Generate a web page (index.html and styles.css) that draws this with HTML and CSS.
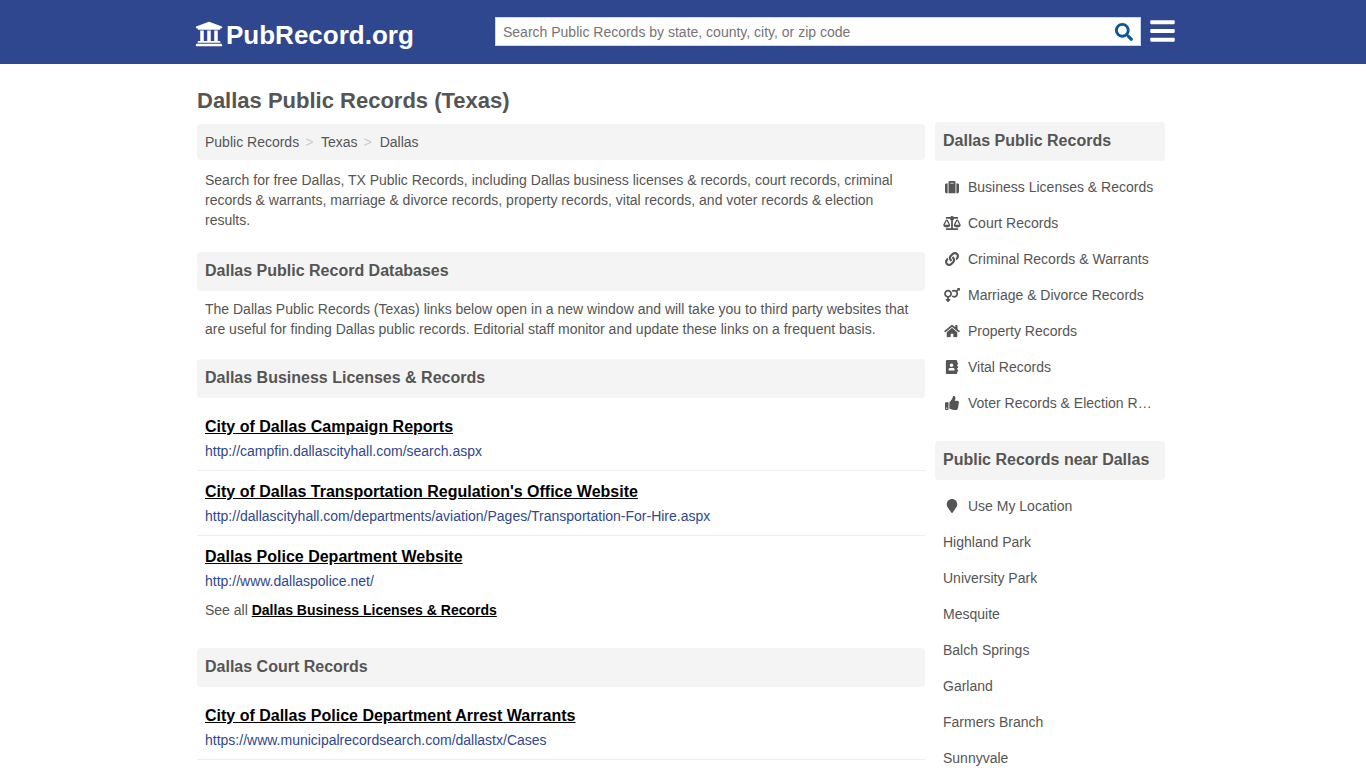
FILE: index.html
```html
<!DOCTYPE html>
<html lang="en">
<head>
  <meta charset="UTF-8">
  <meta name="viewport" content="width=device-width, initial-scale=1.0">
  <title>Dallas Public Records (Texas)</title>
  <link rel="stylesheet" href="styles.css">
</head>
<body>
  <header class="site-header">
    <div class="header-inner">
      <a class="logo" href="#">
        <svg viewBox="0 0 512 512" aria-hidden="true"><path d="M496 128v16a8 8 0 0 1-8 8h-24v12c0 6.627-5.373 12-12 12H60c-6.627 0-12-5.373-12-12v-12H24a8 8 0 0 1-8-8v-16a8 8 0 0 1 4.941-7.392l232-88a7.996 7.996 0 0 1 6.118 0l232 88A8 8 0 0 1 496 128zm-24 304H40c-13.255 0-24 10.745-24 24v16a8 8 0 0 0 8 8h464a8 8 0 0 0 8-8v-16c0-13.255-10.745-24-24-24zM96 192v192H60c-6.627 0-12 5.373-12 12v20h416v-20c0-6.627-5.373-12-12-12h-36V192h-64v192h-64V192h-64v192h-64V192H96z"/></svg>
        <span>PubRecord.org</span>
      </a>
      <form class="search">
        <input type="text" aria-label="Search Public Records" placeholder="Search Public Records by state, county, city, or zip code">
        <button type="submit" aria-label="Search">
          <svg viewBox="0 0 512 512" aria-hidden="true"><path d="M505 442.7L405.3 343c-4.5-4.5-10.6-7-17-7H372c27.6-35.3 44-79.7 44-128C416 93.1 322.9 0 208 0S0 93.1 0 208s93.1 208 208 208c48.3 0 92.7-16.4 128-44v16.3c0 6.4 2.5 12.5 7 17l99.7 99.7c9.4 9.4 24.6 9.4 33.9 0l28.3-28.3c9.4-9.4 9.4-24.6.1-34zM208 336c-70.7 0-128-57.2-128-128 0-70.7 57.2-128 128-128 70.7 0 128 57.2 128 128 0 70.7-57.2 128-128 128z"/></svg>
        </button>
      </form>
      <button class="menu-button" type="button" aria-label="Menu">
        <svg viewBox="0 0 448 512" aria-hidden="true"><path d="M16 132h416c8.837 0 16-7.163 16-16V76c0-8.837-7.163-16-16-16H16C7.163 60 0 67.163 0 76v40c0 8.837 7.163 16 16 16zm0 160h416c8.837 0 16-7.163 16-16v-40c0-8.837-7.163-16-16-16H16c-8.837 0-16 7.163-16 16v40c0 8.837 7.163 16 16 16zm0 160h416c8.837 0 16-7.163 16-16v-40c0-8.837-7.163-16-16-16H16c-8.837 0-16 7.163-16 16v40c0 8.837 7.163 16 16 16z"/></svg>
      </button>
    </div>
  </header>

  <div class="page">
    <main class="content">
      <h1>Dallas Public Records (Texas)</h1>
      <nav class="breadcrumb" aria-label="Breadcrumb">
        <a href="#">Public Records</a>
        <a href="#">Texas</a>
        <a href="#">Dallas</a>
      </nav>
      <p class="text">Search for free Dallas, TX Public Records, including Dallas business licenses &amp; records, court records, criminal records &amp; warrants, marriage &amp; divorce records, property records, vital records, and voter records &amp; election results.</p>

      <section>
        <h2>Dallas Public Record Databases</h2>
        <p class="text intro">The Dallas Public Records (Texas) links below open in a new window and will take you to third party websites that are useful for finding Dallas public records. Editorial staff monitor and update these links on a frequent basis.</p>
      </section>

      <section>
        <h2>Dallas Business Licenses &amp; Records</h2>
        <ul class="records">
          <li>
            <a class="record-title" href="#">City of Dallas Campaign Reports</a>
            <span class="record-url">http://campfin.dallascityhall.com/search.aspx</span>
          </li>
          <li>
            <a class="record-title" href="#">City of Dallas Transportation Regulation's Office Website</a>
            <span class="record-url">http://dallascityhall.com/departments/aviation/Pages/Transportation-For-Hire.aspx</span>
          </li>
          <li>
            <a class="record-title" href="#">Dallas Police Department Website</a>
            <span class="record-url">http://www.dallaspolice.net/</span>
          </li>
        </ul>
        <p class="see-all">See all <a href="#">Dallas Business Licenses &amp; Records</a></p>
      </section>

      <section>
        <h2>Dallas Court Records</h2>
        <ul class="records open">
          <li>
            <a class="record-title" href="#">City of Dallas Police Department Arrest Warrants</a>
            <span class="record-url">https://www.municipalrecordsearch.com/dallastx/Cases</span>
          </li>
        </ul>
      </section>
    </main>

    <aside class="sidebar">
      <section>
        <h2>Dallas Public Records</h2>
        <ul class="side-links">
          <li><a href="#"><svg viewBox="0 0 512 512" aria-hidden="true"><path d="M128 480h256V80c0-26.5-21.5-48-48-48H176c-26.5 0-48 21.5-48 48v400zm64-384h128v32H192V96zm320 80v256c0 26.5-21.5 48-48 48h-48V128h48c26.5 0 48 21.5 48 48zM96 480H48c-26.5 0-48-21.5-48-48V176c0-26.5 21.5-48 48-48h48v352z"/></svg><span>Business Licenses &amp; Records</span></a></li>
          <li><a href="#"><svg viewBox="0 0 640 512" aria-hidden="true"><path d="M256 336h-.02c0-16.18 1.34-8.73-85.05-181.51-17.65-35.29-68.19-35.36-85.87 0C-2.06 328.75.02 320.33.02 336H0c0 44.18 57.31 80 128 80s128-35.82 128-80zM128 176l72 144H56l72-144zm511.98 160c0-16.18 1.34-8.73-85.05-181.51-17.65-35.29-68.19-35.36-85.87 0-87.12 174.26-85.04 165.84-85.04 181.51H384c0 44.18 57.31 80 128 80s128-35.82 128-80h-.02zM440 320l72-144 72 144H440zm88 128H352V153.25c23.51-10.29 41.16-31.48 46.39-57.25H528c8.84 0 16-7.16 16-16V48c0-8.84-7.16-16-16-16H383.64C369.04 12.68 346.09 0 320 0s-49.04 12.68-63.64 32H112c-8.84 0-16 7.16-16 16v32c0 8.84 7.16 16 16 16h129.61c5.23 25.76 22.87 46.96 46.39 57.25V448H112c-8.84 0-16 7.16-16 16v32c0 8.84 7.16 16 16 16h416c8.84 0 16-7.16 16-16v-32c0-8.84-7.16-16-16-16z"/></svg><span>Court Records</span></a></li>
          <li><a href="#"><svg viewBox="0 0 512 512" aria-hidden="true"><path d="M326.612 185.391c59.747 59.809 58.927 155.698.36 214.59-.11.12-.24.25-.36.37l-67.2 67.2c-59.27 59.27-155.699 59.262-214.96 0-59.27-59.26-59.27-155.7 0-214.96l37.106-37.106c9.84-9.84 26.786-3.3 27.294 10.606.648 17.722 3.826 35.527 9.69 52.721 1.986 5.822.567 12.262-3.783 16.612l-13.087 13.087c-28.026 28.026-28.905 73.66-1.155 101.96 28.024 28.579 74.086 28.749 102.325.51l67.2-67.19c28.191-28.191 28.073-73.757 0-101.83-3.701-3.694-7.429-6.564-10.341-8.569a16.037 16.037 0 0 1-6.947-12.606c-.396-10.567 3.348-21.456 11.698-29.806l21.054-21.055c5.521-5.521 14.182-6.199 20.584-1.731a152.482 152.482 0 0 1 20.522 17.197zM467.547 44.449c-59.261-59.262-155.69-59.27-214.96 0l-67.2 67.2c-.12.12-.25.25-.36.37-58.566 58.892-59.387 154.781.36 214.59a152.454 152.454 0 0 0 20.521 17.196c6.402 4.468 15.064 3.789 20.584-1.731l21.054-21.055c8.35-8.35 12.094-19.239 11.698-29.806a16.037 16.037 0 0 0-6.947-12.606c-2.912-2.005-6.64-4.875-10.341-8.569-28.073-28.073-28.191-73.639 0-101.83l67.2-67.19c28.239-28.239 74.3-28.069 102.325.51 27.75 28.3 26.872 73.934-1.155 101.96l-13.087 13.087c-4.35 4.35-5.769 10.79-3.783 16.612 5.864 17.194 9.042 34.999 9.69 52.721.509 13.906 17.454 20.446 27.294 10.606l37.106-37.106c59.271-59.259 59.271-155.699.001-214.959z"/></svg><span>Criminal Records &amp; Warrants</span></a></li>
          <li><a href="#"><svg viewBox="0 0 576 512" aria-hidden="true"><path d="M564 0h-79c-10.7 0-16 12.9-8.5 20.5l16.9 16.9-48.7 48.7C422.5 72.1 396.2 64 368 64c-33.7 0-64.6 11.6-89.2 30.9 14 16.7 25 36 32.1 57.1 14.5-14.8 34.7-24 57.1-24 44.1 0 80 35.9 80 80s-35.9 80-80 80c-22.3 0-42.6-9.2-57.1-24-7.1 21.1-18 40.4-32.1 57.1 24.5 19.4 55.5 30.9 89.2 30.9 79.5 0 144-64.5 144-144 0-28.2-8.1-54.5-22.1-76.7l48.7-48.7 16.9 16.9c2.4 2.4 5.4 3.5 8.4 3.5 6.2 0 12.1-4.8 12.1-12V12c0-6.6-5.4-12-12-12zM144 64C64.5 64 0 128.5 0 208c0 68.5 47.9 125.9 112 140.4V400H76c-6.6 0-12 5.4-12 12v40c0 6.6 5.4 12 12 12h36v36c0 6.6 5.4 12 12 12h40c6.6 0 12-5.4 12-12v-36h36c6.6 0 12-5.4 12-12v-40c0-6.6-5.4-12-12-12h-36v-51.6c64.1-14.6 112-71.9 112-140.4 0-79.5-64.5-144-144-144zm0 224c-44.1 0-80-35.9-80-80s35.9-80 80-80 80 35.9 80 80-35.9 80-80 80z"/></svg><span>Marriage &amp; Divorce Records</span></a></li>
          <li><a href="#"><svg viewBox="0 0 576 512" aria-hidden="true"><path d="M280.37 148.26L96 300.11V464a16 16 0 0 0 16 16l112.06-.29a16 16 0 0 0 15.92-16V368a16 16 0 0 1 16-16h64a16 16 0 0 1 16 16v95.64a16 16 0 0 0 16 16.05L464 480a16 16 0 0 0 16-16V300L295.67 148.26a12.19 12.19 0 0 0-15.3 0zM571.6 251.47L488 182.56V44.05a12 12 0 0 0-12-12h-56a12 12 0 0 0-12 12v72.61L318.47 43a48 48 0 0 0-61 0L4.34 251.47a12 12 0 0 0-1.6 16.9l25.5 31A12 12 0 0 0 45.15 301l235.22-193.74a12.19 12.19 0 0 1 15.3 0L530.9 301a12 12 0 0 0 16.9-1.6l25.5-31a12 12 0 0 0-1.7-16.93z"/></svg><span>Property Records</span></a></li>
          <li><a href="#"><svg viewBox="0 0 448 512" aria-hidden="true"><path d="M436 160c6.6 0 12-5.4 12-12v-40c0-6.6-5.4-12-12-12h-20V48c0-26.5-21.5-48-48-48H48C21.5 0 0 21.5 0 48v416c0 26.5 21.5 48 48 48h320c26.5 0 48-21.5 48-48v-48h20c6.6 0 12-5.4 12-12v-40c0-6.6-5.4-12-12-12h-20v-64h20c6.6 0 12-5.4 12-12v-40c0-6.6-5.4-12-12-12h-20v-64h20zm-228-32c35.3 0 64 28.7 64 64s-28.7 64-64 64-64-28.7-64-64 28.7-64 64-64zm112 236.8c0 10.6-10 19.2-22.4 19.2H118.4C106 384 96 375.4 96 364.8v-19.2c0-31.8 30.1-57.6 67.2-57.6h5c12.3 5.1 25.7 8 39.8 8s27.6-2.9 39.8-8h5c37.1 0 67.2 25.8 67.2 57.6v19.2z"/></svg><span>Vital Records</span></a></li>
          <li><a href="#"><svg viewBox="0 0 512 512" aria-hidden="true"><path d="M104 224H24c-13.255 0-24 10.745-24 24v240c0 13.255 10.745 24 24 24h80c13.255 0 24-10.745 24-24V248c0-13.255-10.745-24-24-24zM64 472c-13.255 0-24-10.745-24-24s10.745-24 24-24 24 10.745 24 24-10.745 24-24 24zM384 81.452c0 42.416-25.97 66.208-33.277 94.548h101.723c33.397 0 59.397 27.746 59.553 58.098.084 17.938-7.546 37.249-19.439 49.197l-.11.11c9.836 23.337 8.237 56.037-9.308 79.469 8.681 25.895-.069 57.704-16.382 74.757 4.298 17.598 2.244 32.575-6.148 44.632C440.202 511.587 389.616 512 346.839 512l-2.845-.001c-48.287-.017-87.806-17.598-119.56-31.725-15.957-7.099-36.821-15.887-52.651-16.178-6.54-.12-11.783-5.457-11.783-11.998v-213.77c0-3.2 1.282-6.271 3.558-8.521 39.614-39.144 56.648-80.587 89.117-113.111 14.804-14.832 20.188-37.236 25.393-58.902C282.515 39.293 291.817 0 312 0c24 0 72 8 72 81.452z"/></svg><span>Voter Records &amp; Election Results</span></a></li>
        </ul>
      </section>

      <section>
        <h2>Public Records near Dallas</h2>
        <ul class="side-links">
          <li><a href="#"><svg viewBox="0 0 384 512" aria-hidden="true"><path d="M172.268 501.67C26.97 291.031 0 269.413 0 192 0 85.961 85.961 0 192 0s192 85.961 192 192c0 77.413-26.97 99.031-172.268 309.67-9.535 13.774-29.93 13.773-39.464 0z"/></svg><span>Use My Location</span></a></li>
          <li><a href="#">Highland Park</a></li>
          <li><a href="#">University Park</a></li>
          <li><a href="#">Mesquite</a></li>
          <li><a href="#">Balch Springs</a></li>
          <li><a href="#">Garland</a></li>
          <li><a href="#">Farmers Branch</a></li>
          <li><a href="#">Sunnyvale</a></li>
        </ul>
      </section>
    </aside>
  </div>
</body>
</html>
```
FILE: styles.css
```css
:root {
  --brand: #2f478e;
  --text: #555;
  --panel: #f4f4f4;
}

* {
  margin: 0;
  padding: 0;
  box-sizing: border-box;
}

body {
  font-family: "Liberation Sans", Arial, sans-serif;
  font-size: 14px;
  line-height: 20px;
  color: var(--text);
  background: #fff;
}

a {
  color: inherit;
  text-decoration: none;
}

ul {
  list-style: none;
}

svg {
  fill: currentColor;
}

/* header */
.site-header {
  background: var(--brand);
  color: #fff;
}

.header-inner {
  display: flex;
  align-items: center;
  max-width: 984px;
  height: 64px;
  margin: 0 auto;
  padding: 0 0 2px 4px;
}

.logo {
  display: flex;
  align-items: center;
  gap: 3px;
  flex: 0 0 300px;
  padding-top: 7px;
  font-size: 26px;
  line-height: 30px;
  font-weight: bold;
}

.logo svg {
  width: 28px;
  height: 28px;
  margin-bottom: 2px;
}

.search {
  display: flex;
  flex: 1;
  height: 29px;
  background: #fff;
  border: 1px solid #c5d9f1;
}

.search input {
  flex: 1;
  min-width: 0;
  padding: 2px 7px 0;
  border: 0;
  outline: 0;
  font: inherit;
  background: transparent;
}

.search input::placeholder {
  color: #757575;
}

.search button {
  display: flex;
  align-items: center;
  padding: 2px 7px 0;
  border: 0;
  background: transparent;
  color: #0b559f;
  cursor: pointer;
}

.search svg {
  width: 18px;
  height: 18px;
}

.menu-button {
  display: flex;
  margin-left: 9px;
  border: 0;
  background: transparent;
  color: #fff;
  cursor: pointer;
}

.menu-button svg {
  width: 25px;
  height: 28px;
}

/* page */
.page {
  display: flex;
  align-items: flex-start;
  gap: 10px;
  max-width: 980px;
  margin: 0 auto;
  padding: 23px 8px 0 4px;
}

.content {
  flex: 1;
  min-width: 0;
}

.sidebar {
  flex: 0 0 230px;
  min-width: 0;
  padding-top: 35px;
}

h1 {
  margin-bottom: 9px;
  font-size: 22px;
  line-height: 28px;
}

h2 {
  padding: 9px 8px 10px;
  border-radius: 4px;
  background: var(--panel);
  font-size: 16px;
  line-height: 20px;
}

.breadcrumb {
  padding: 8px;
  border-radius: 4px;
  background: var(--panel);
}

.breadcrumb a:not(:last-child)::after {
  content: ">";
  padding: 0 4px 0 6px;
  color: #ccc;
}

.text {
  padding: 10px 8px 22px;
}

.intro {
  padding: 8px 8px 20px;
}

.records {
  padding-top: 8px;
}

.records li {
  padding: 11px 8px 9px;
  border-bottom: 1px solid #eee;
}

.records:not(.open) li:last-child {
  border-bottom: 0;
}

.record-title {
  display: block;
  margin-bottom: 4px;
  font-size: 16px;
  font-weight: bold;
  color: #000;
  text-decoration: underline;
}

.record-url {
  display: block;
  color: var(--brand);
}

.see-all {
  padding: 0 8px 28px;
}

.see-all a {
  font-weight: bold;
  color: #000;
  text-decoration: underline;
}

/* sidebar */
.side-links {
  padding: 8px 0 20px;
}

.side-links a {
  display: flex;
  align-items: center;
  gap: 7px;
  padding: 8px;
}

.side-links svg {
  flex: none;
  width: 18px;
  height: 14px;
}

.side-links span {
  overflow: hidden;
  text-overflow: ellipsis;
  white-space: nowrap;
}
```
